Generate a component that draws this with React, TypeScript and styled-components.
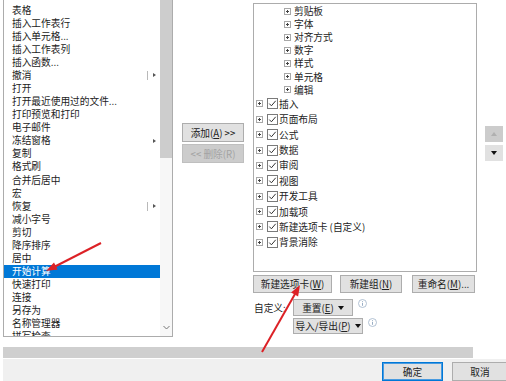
import React from 'react';
import styled, { createGlobalStyle } from 'styled-components';

const GlobalStyle = createGlobalStyle`
  html, body {
    margin: 0;
    padding: 0;
    background: #ffffff;
  }
  body {
    font-family: "Noto Sans CJK SC", "Liberation Sans", sans-serif;
    color: #222222;
  }
`;

const Page = styled.div`
  position: relative;
  width: 506px;
  height: 381px;
  overflow: hidden;
  display: flex;
  flex-direction: column;
  background: #ffffff;
  font-size: 9.7px;
`;

const Main = styled.div`
  display: flex;
  height: 347px;
  flex-shrink: 0;
`;

/* ---------- left command list ---------- */

const ListBox = styled.div`
  margin-left: 3px;
  width: 170px;
  height: 337px;
  box-sizing: border-box;
  border-left: 1px solid #acacac;
  border-right: 1px solid #acacac;
  border-bottom: 1px solid #acacac;
  display: flex;
  overflow: hidden;
`;

const Items = styled.div`
  width: 156px;
  padding-top: 3.5px;
  overflow: hidden;
`;

const Item = styled.div<{ selected?: boolean }>`
  position: relative;
  height: 13.08px;
  line-height: 13.08px;
  padding-left: 8px;
  white-space: nowrap;
  background: ${({ selected }) => (selected ? '#0078d7' : 'transparent')};
  color: ${({ selected }) => (selected ? '#ffffff' : '#222222')};
`;

const SubArrow = styled.span<{ divider?: boolean }>`
  position: absolute;
  right: 4px;
  top: 2px;
  height: 9px;
  width: 8px;
  display: flex;
  align-items: center;
  justify-content: flex-end;
  border-left: ${({ divider }) => (divider ? '1px solid #b9b9b9' : 'none')};

  &::after {
    content: '';
    border-left: 3px solid #555555;
    border-top: 2.5px solid transparent;
    border-bottom: 2.5px solid transparent;
  }
`;

const ScrollTrack = styled.div`
  width: 12px;
  background: #f7f7f7;
  display: flex;
  flex-direction: column;
  justify-content: space-between;
  align-items: center;
`;

const ScrollThumb = styled.div`
  width: 12px;
  height: 158px;
  background: #cdcdcd;
`;

const ScrollDown = styled.div`
  height: 14px;
  display: flex;
  align-items: center;
  justify-content: center;
  margin-bottom: 2px;
`;

/* ---------- middle add/remove ---------- */

const Middle = styled.div`
  width: 80px;
  display: flex;
  flex-direction: column;
  gap: 2px;
  padding: 123px 0 0 9px;
  box-sizing: border-box;
`;

const Button = styled.div<{ w: number; h?: number; disabled?: boolean }>`
  width: ${({ w }) => w}px;
  height: ${({ h }) => h ?? 19}px;
  box-sizing: border-box;
  display: flex;
  align-items: center;
  justify-content: center;
  gap: 4px;
  white-space: nowrap;
  background: ${({ disabled }) => (disabled ? '#cccccc' : '#e1e1e1')};
  border: 1px solid ${({ disabled }) => (disabled ? '#bfbfbf' : '#adadad')};
  color: ${({ disabled }) => (disabled ? '#a3a3a3' : '#222222')};
`;

const Key = styled.span`
  text-decoration: underline;
`;

/* ---------- right tree ---------- */

const Right = styled.div`
  flex: 1;
  display: flex;
  flex-direction: column;
`;

const TopRow = styled.div`
  display: flex;
`;

const TreeBox = styled.div`
  margin-top: 3px;
  width: 224px;
  height: 269px;
  box-sizing: border-box;
  border: 1px solid #acacac;
  padding-top: 0.5px;
  overflow: hidden;
`;

const TreeRow = styled.div<{ sub?: boolean }>`
  display: flex;
  align-items: center;
  height: ${({ sub }) => (sub ? 13.1 : 15.4)}px;
  padding-left: ${({ sub }) => (sub ? 29.5 : 1.5)}px;
  white-space: nowrap;
`;

const TreeLabel = styled.span<{ sub?: boolean }>`
  margin-left: ${({ sub }) => (sub ? 3.5 : 1.5)}px;
`;

const CheckWrap = styled.span`
  display: flex;
  margin-left: 4px;
`;

const SideButtons = styled.div`
  margin-left: 8px;
  padding-top: 126px;
  display: flex;
  flex-direction: column;
  gap: 3px;
`;

const SideButton = styled.div<{ disabled?: boolean }>`
  width: 18px;
  height: 16px;
  display: flex;
  align-items: center;
  justify-content: center;
  background: ${({ disabled }) => (disabled ? '#cccccc' : '#e1e1e1')};
`;

const ButtonRow = styled.div`
  display: flex;
  margin-top: 3px;
  gap: 8px;

  & > :last-child {
    margin-left: 2px;
  }
`;

const CustomGrid = styled.div`
  display: grid;
  grid-template-columns: 40px auto;
  row-gap: 2px;
  margin-top: 6px;
  align-items: center;
`;

const CustomLabel = styled.span`
  padding-left: 1px;
`;

const DropLine = styled.div`
  display: flex;
  align-items: flex-start;
  gap: 5px;
`;

/* ---------- bottom ---------- */

const Band = styled.div`
  height: 11px;
  width: 470px;
  margin-left: 3px;
  background: #cfcfcf;
  border-bottom: 1px solid #ffffff;
  flex-shrink: 0;
`;

const Footer = styled.div`
  flex: 1;
  margin-left: 3px;
  background: #f0f0f0;
  display: flex;
  justify-content: flex-end;
  gap: 9px;
  padding-top: 3px;
  box-sizing: border-box;
`;

const FooterButton = styled.div<{ primary?: boolean }>`
  width: ${({ primary }) => (primary ? 61 : 56)}px;
  height: 19px;
  box-sizing: border-box;
  display: flex;
  align-items: center;
  justify-content: center;
  background: #e1e1e1;
  border: 1px solid ${({ primary }) => (primary ? '#0078d7' : '#adadad')};
  box-shadow: ${({ primary }) => (primary ? 'inset 0 0 0 1px #4a9be0' : 'none')};
  margin-right: ${({ primary }) => (primary ? 0 : -2)}px;
`;

const Overlay = styled.svg`
  position: absolute;
  left: 0;
  top: 0;
  pointer-events: none;
`;

/* ---------- icons ---------- */

const Expander = () => (
  <svg width="7" height="7" viewBox="0 0 7 7">
    <rect x="0.5" y="0.5" width="6" height="6" fill="#fff" stroke="#a8a8a8" />
    <path d="M2 3.5h3M3.5 2v3" stroke="#444" strokeWidth="1" />
  </svg>
);

const Check = () => (
  <svg width="11" height="11" viewBox="0 0 11 11">
    <rect x="0.5" y="0.5" width="10" height="10" fill="#fff" stroke="#7a7a7a" />
    <polyline points="2.3,5.6 4.4,7.8 8.7,2.8" fill="none" stroke="#333" strokeWidth="1" />
  </svg>
);

const Caret = () => (
  <svg width="6" height="4" viewBox="0 0 6 4">
    <path d="M0 0h6L3 4z" fill="#111" />
  </svg>
);

const Info = () => (
  <svg width="9" height="9" viewBox="0 0 9 9">
    <circle cx="4.5" cy="4.5" r="4" fill="none" stroke="#9fb3c8" strokeWidth="0.8" />
    <rect x="4.1" y="3.8" width="0.8" height="3" fill="#7f9ab6" />
    <rect x="4.1" y="2.2" width="0.8" height="0.8" fill="#7f9ab6" />
  </svg>
);

type ListItem = { text: string; sub?: boolean; divider?: boolean; selected?: boolean };

const commands: ListItem[] = [
  { text: '表格' },
  { text: '插入工作表行' },
  { text: '插入单元格...' },
  { text: '插入工作表列' },
  { text: '插入函数...' },
  { text: '撤消', sub: true, divider: true },
  { text: '打开' },
  { text: '打开最近使用过的文件...' },
  { text: '打印预览和打印' },
  { text: '电子邮件' },
  { text: '冻结窗格', sub: true },
  { text: '复制' },
  { text: '格式刷' },
  { text: '合并后居中' },
  { text: '宏' },
  { text: '恢复', sub: true, divider: true },
  { text: '减小字号' },
  { text: '剪切' },
  { text: '降序排序' },
  { text: '居中' },
  { text: '开始计算', selected: true },
  { text: '快速打印' },
  { text: '连接' },
  { text: '另存为' },
  { text: '名称管理器' },
  { text: '拼写检查' },
];

const groups = ['剪贴板', '字体', '对齐方式', '数字', '样式', '单元格', '编辑'];
const tabs = ['插入', '页面布局', '公式', '数据', '审阅', '视图', '开发工具', '加载项', '新建选项卡 (自定义)', '背景消除'];

export default function App() {
  return (
    <Page>
      <GlobalStyle />
      <Main>
        <ListBox>
          <Items>
            {commands.map((c) => (
              <Item key={c.text} selected={c.selected}>
                {c.text}
                {c.sub && <SubArrow divider={c.divider} />}
              </Item>
            ))}
          </Items>
          <ScrollTrack>
            <ScrollThumb />
            <ScrollDown>
              <svg width="7" height="5" viewBox="0 0 7 5">
                <polyline points="0.5,1 3.5,4 6.5,1" fill="none" stroke="#777" strokeWidth="1" />
              </svg>
            </ScrollDown>
          </ScrollTrack>
        </ListBox>

        <Middle>
          <Button w={62}>
            <span>
              添加(<Key>A</Key>) &gt;&gt;
            </span>
          </Button>
          <Button w={62} disabled>
            <span>&lt;&lt; 删除(R)</span>
          </Button>
        </Middle>

        <Right>
          <TopRow>
            <TreeBox>
              {groups.map((g) => (
                <TreeRow sub key={g}>
                  <Expander />
                  <TreeLabel sub>{g}</TreeLabel>
                </TreeRow>
              ))}
              {tabs.map((t) => (
                <TreeRow key={t}>
                  <Expander />
                  <CheckWrap>
                    <Check />
                  </CheckWrap>
                  <TreeLabel>{t}</TreeLabel>
                </TreeRow>
              ))}
            </TreeBox>
            <SideButtons>
              <SideButton disabled>
                <svg width="6" height="4" viewBox="0 0 6 4">
                  <path d="M0 4h6L3 0z" fill="#b0b0b0" />
                </svg>
              </SideButton>
              <SideButton>
                <Caret />
              </SideButton>
            </SideButtons>
          </TopRow>

          <ButtonRow>
            <Button w={79} h={18}>
              <span>
                新建选项卡(<Key>W</Key>)
              </span>
            </Button>
            <Button w={62} h={18}>
              <span>
                新建组(<Key>N</Key>)
              </span>
            </Button>
            <Button w={63} h={18}>
              <span>
                重命名(<Key>M</Key>)...
              </span>
            </Button>
          </ButtonRow>

          <CustomGrid>
            <CustomLabel>自定义:</CustomLabel>
            <DropLine>
              <Button w={60} h={17}>
                <span>
                  重置(<Key>E</Key>)
                </span>
                <Caret />
              </Button>
              <Info />
            </DropLine>
            <span />
            <DropLine>
              <Button w={70} h={16}>
                <span>
                  导入/导出(<Key>P</Key>)
                </span>
                <Caret />
              </Button>
              <Info />
            </DropLine>
          </CustomGrid>
        </Right>
      </Main>

      <Band />
      <Footer>
        <FooterButton primary>确定</FooterButton>
        <FooterButton>取消</FooterButton>
      </Footer>

      <Overlay width="506" height="381" viewBox="0 0 506 381">
        <line x1="101" y1="243" x2="55" y2="266.5" stroke="#dc2126" strokeWidth="2" />
        <polygon points="46,271 57.6,269.6 54,262.4" fill="#dc2126" />
        <line x1="262" y1="352" x2="295" y2="294" stroke="#dc2126" strokeWidth="2" />
        <polygon points="300,285 298.1,296.6 291.1,292.6" fill="#dc2126" />
      </Overlay>
    </Page>
  );
}
